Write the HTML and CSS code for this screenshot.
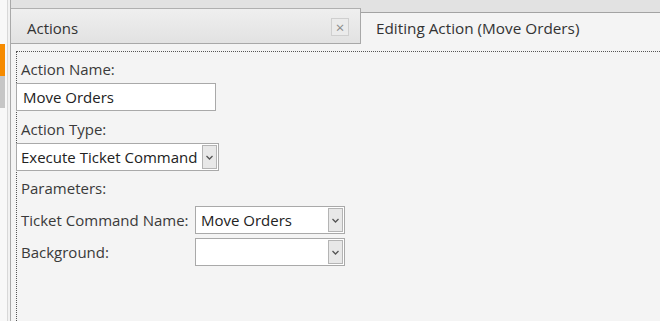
FILE: index.html
```html
<!DOCTYPE html>
<html lang="en">
<head>
    <meta charset="UTF-8">
    <title>Editing Action</title>
    <link rel="stylesheet" href="styles.css">
</head>
<body>
    <div id="app">
        <aside class="side">
            <div class="side-mark orange"></div>
            <div class="side-mark grey"></div>
        </aside>

        <div class="main">
            <div class="tabs">
                <div class="tab-actions">
                    <span class="tab-title">Actions</span>
                    <span class="tab-close">&times;</span>
                </div>
                <div class="tab-edit">
                    <span class="tab-title">Editing Action (Move Orders)</span>
                </div>
            </div>

            <section class="content">
                <div class="focus-box">
                    <p class="label">Action Name:</p>
                    <div class="field name-field">Move Orders</div>

                    <p class="label">Action Type:</p>
                    <div class="combo type-combo">
                        <span class="combo-text">Execute Ticket Command</span>
                        <span class="drop">
                            <svg width="7" height="5" viewBox="0 0 7 5"><polyline points="0.5,1 3.5,4 6.5,1" fill="none" stroke="#555" stroke-width="1.3"/></svg>
                        </span>
                    </div>

                    <p class="label">Parameters:</p>

                    <div class="params">
                        <span class="label">Ticket Command Name:</span>
                        <div class="combo">
                            <span class="combo-text">Move Orders</span>
                            <span class="drop">
                                <svg width="7" height="5" viewBox="0 0 7 5"><polyline points="0.5,1 3.5,4 6.5,1" fill="none" stroke="#555" stroke-width="1.3"/></svg>
                            </span>
                        </div>

                        <span class="label">Background:</span>
                        <div class="combo">
                            <span class="combo-text"></span>
                            <span class="drop">
                                <svg width="7" height="5" viewBox="0 0 7 5"><polyline points="0.5,1 3.5,4 6.5,1" fill="none" stroke="#555" stroke-width="1.3"/></svg>
                            </span>
                        </div>
                    </div>
                </div>
            </section>
        </div>
    </div>
</body>
</html>
```

FILE: styles.css
```css
*{
    box-sizing: border-box;
}

html, body{
    margin: 0;
    padding: 0;
}

body{
    width: 660px;
    height: 321px;
    overflow: hidden;
    background: #f4f4f4;
    font-family: "Open Sans", "Noto Sans", sans-serif;
    font-size: 15px;
    color: #3a3a3a;
}

#app{
    display: flex;
    height: 321px;
}

/* left strip */
.side{
    width: 11px;
    padding-top: 44px;
    background: linear-gradient(to right, #f8f8f8 0, #f8f8f8 7px, #d8d8d8 7px, #d8d8d8 8px, #f2f2f2 8px);
    border-right: 1px solid #a9a9a9;
}

.side-mark{
    width: 5px;
    height: 32px;
}
.side-mark.orange{background: #f68b00;}
.side-mark.grey{background: #c6c6c6;}

.main{
    flex: 1;
    display: flex;
    flex-direction: column;
}

/* tab header */
.tabs{
    display: flex;
    align-items: flex-end;
    height: 44px;
    background: #e2e2e2;
}

.tab-actions{
    display: flex;
    align-items: center;
    justify-content: space-between;
    width: 350px;
    height: 36px;
    padding: 0 11px 0 16px;
    border-top: 1px solid #b0b0b0;
    border-right: 1px solid #a8a8a8;
    border-bottom: 1px solid #a8a8a8;
    background: linear-gradient(#efefef, #e2e2e2);
}

.tab-actions .tab-title{
    padding-top: 3px;
}

.tab-title{
    font-size: 15px;
    color: #333;
}

.tab-close{
    display: flex;
    justify-content: center;
    align-items: center;
    width: 18px;
    height: 18px;
    margin-top: 2px;
    border: 1px solid #cfcfcf;
    background: #ebebeb;
    color: #8a8a8a;
    font-size: 15px;
    line-height: 1;
}

.tab-edit{
    flex: 1;
    display: flex;
    align-items: center;
    height: 38px;
    margin-bottom: -6px;
    padding: 0 0 7px 15px;
    border-top: 1px solid #a3a3a3;
    background: #f4f4f4;
}

.tab-edit .tab-title{
    font-size: 15.3px;
}

/* editor */
.content{
    flex: 1;
    padding: 7px 0 0 5px;
}

.focus-box{
    height: 100%;
    padding: 7px 0 0 4px;
    border-top: 1px dotted #555;
    border-left: 1px dotted #555;
}

.label{
    margin: 0;
    line-height: 20px;
}

.field{
    width: 200px;
    height: 28px;
    margin: 4px 0 8px -5px;
    padding: 0 6px;
    border: 1px solid #a9a9a9;
    background: #fff;
    color: #222;
    line-height: 26px;
}

.combo{
    display: flex;
    align-items: center;
    justify-content: space-between;
    width: 150px;
    height: 28px;
    padding: 0 1px 0 5px;
    border: 1px solid #a9a9a9;
    background: #fff;
    color: #222;
}

.type-combo{
    width: 203px;
    margin: 4px 0 7px -5px;
    padding-left: 4px;
}

.combo-text{
    white-space: nowrap;
}

.drop{
    display: flex;
    justify-content: center;
    align-items: center;
    width: 15px;
    height: 24px;
    border: 1px solid #b4b4b4;
    background: #e8e8e8;
}

.params{
    display: grid;
    grid-template-columns: 174px 150px;
    align-items: center;
    row-gap: 4px;
    margin-top: 8px;
}
```
